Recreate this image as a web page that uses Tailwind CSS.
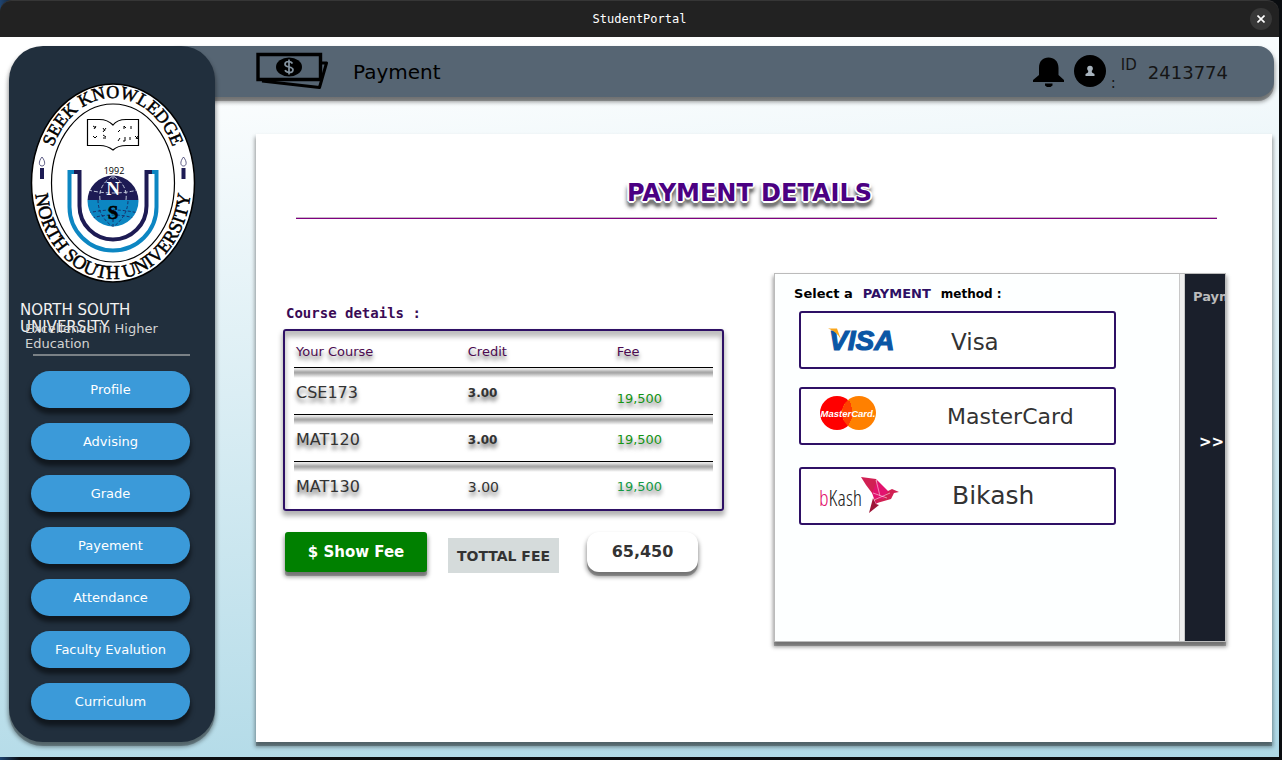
<!DOCTYPE html>
<html lang="en">
<head>
<meta charset="utf-8">
<meta name="viewport" content="width=device-width, initial-scale=1">
<title>StudentPortal</title>
<script src="https://cdn.jsdelivr.net/npm/@tailwindcss/browser@4"></script>
</head>
<body class="bg-[linear-gradient(to_right,#1f4470_0px,#0a0d10_20px)] font-['DejaVu_Sans',sans-serif] text-[#333333]">
<div class="flex min-h-screen flex-col pr-[3px] pb-[3px]">

  <!-- Window title bar -->
  <div class="relative flex h-[37px] items-center justify-center rounded-t-xl border-t border-[#363636] bg-[#222222]">
    <span class="font-['DejaVu_Sans_Mono',monospace] text-xs text-white">StudentPortal</span>
    <button type="button" aria-label="Close" class="absolute right-[7px] grid size-[22px] place-items-center rounded-full bg-[#383838] text-white">
      <svg class="size-2" viewBox="0 0 8 8" fill="none" stroke="currentColor" stroke-width="1.6"><path d="M.5.5l7 7M7.5.5l-7 7"/></svg>
    </button>
  </div>

  <main class="flex grow bg-[linear-gradient(176deg,#ffffff_4%,#add8e6)] pt-[9px] pb-[15px] pl-[9px]">

    <!-- Sidebar -->
    <aside class="relative z-10 w-[206px] shrink-0 rounded-[34px] bg-[#212f3d] pt-9 shadow-[0_4px_0_rgba(0,0,0,0.25),0_4px_4px_1px_rgba(0,0,0,0.4)]">
      <svg class="ml-[21px] block h-[202px] w-[166px]" viewBox="30 82 166 202" role="img" aria-label="North South University seal">
        <defs>
          <path id="arc-top" d="M47 183 A66 85 0 0 1 179 183"/>
          <path id="arc-bottom" d="M35 183 A78 96 0 0 0 191 183"/>
          <clipPath id="globe"><circle cx="113" cy="201" r="25.500"/></clipPath>
        </defs>
        <ellipse cx="113" cy="183" rx="81.500" ry="99" fill="#fff" stroke="#000" stroke-width="1.500"/>
        <ellipse cx="113" cy="183" rx="61.500" ry="79" fill="#fff" stroke="#000" stroke-width="1.200"/>
        <g font-family="'Liberation Serif', serif" fill="#000" stroke="#000" stroke-width=".5" text-anchor="middle">
          <text font-size="18"><textPath href="#arc-top" startOffset="50%">SEEK KNOWLEDGE</textPath></text>
          <text font-size="19"><textPath href="#arc-bottom" startOffset="50%">NORTH SOUTH UNIVERSITY</textPath></text>
        </g>
        <g fill="#1d1b54"><rect x="40" y="168" width="4" height="11"/><rect x="181.500" y="168" width="4" height="11"/></g>
        <g fill="#fff" stroke="#1d1b54" stroke-width=".7"><path d="M42 157c4 5 3 9 0 9s-4-4 0-9zM183.500 157c4 5 3 9 0 9s-4-4 0-9z"/></g>
        <!-- open book -->
        <path d="M87.500 119.500h12c6 0 10 2 13.500 5.500 3-4 7-5.500 13-5.500h12.500v26h-12c-6 0-10 1-13.500 4.500-4-3-8-4.500-13-4.500h-12.500z" fill="#fff" stroke="#000" stroke-width="1.200"/>
        <path d="M93 126l3 2m0-2l-2 3m9-1l2 3m1-3l-3 4M93 136l2 2 2-2m6-1l3 2m-3 1h3M118 132l2-2m4-1v-3l2 2m5-2v3m-13 12l2-3m5-1v4h-2m7-4v3m5-4l3 3m0-3l-2 3" fill="none" stroke="#000" stroke-width="1"/>
        <!-- U-shaped bands -->
        <path d="M75 172h-5.500v35a43.500 43.500 0 0 0 87 0v-35H151" fill="none" stroke="#0c86c2" stroke-width="4"/>
        <path d="M74 172h5.500v34a33.500 33.500 0 0 0 67 0v-34h5.500" fill="none" stroke="#1d1b54" stroke-width="4"/>
        <text x="114" y="174" text-anchor="middle" font-family="'Open Sans', sans-serif" font-size="9" fill="#000">1992</text>
        <g clip-path="url(#globe)">
          <rect x="87" y="175" width="52" height="25" fill="#1d1b54"/><rect x="87" y="200" width="52" height="27" fill="#0c86c2"/>
          <g fill="none" stroke="#e8f2fa" stroke-width=".8" stroke-dasharray="4 2"><path d="M88 190q25 6 50 0M113 175v6"/><path d="M100 200q-2-15 13-24q15 9 13 24"/></g>
          <g fill="none" stroke="#1d1b54" stroke-width=".8" stroke-dasharray="3 2"><path d="M88 213q25-6 50 0M113 219v8M92 218q21-6 42 0"/><path d="M98 200q0 16 15 27q15-11 15-27"/></g>
        </g>
        <g text-anchor="middle" font-family="'Liberation Serif', serif" font-weight="700" font-size="19"><text x="113" y="195" fill="#fff">N</text><text x="113" y="219" fill="#000" stroke="#000" stroke-width=".6">S</text></g>
      </svg>
      <p class="mt-[18px] ml-[11px] w-[150px] text-[15px] leading-[17px] text-[#f2f2f2]">NORTH SOUTH UNIVERSITY</p>
      <p class="-mt-[15px] ml-4 w-[150px] text-[13px] leading-[15px] text-[#d3d3d3]">Excellence in Higher Education</p>
      <hr class="mt-[3px] mr-[25px] ml-6 h-[2px] border-0 bg-[#7a8186]">
      <nav class="mt-[15px] mr-[25px] ml-[22px] grid gap-[15px] text-[13px] text-white">
        <button type="button" class="h-[37px] rounded-full bg-[#3b9ad9] shadow-[0_5px_4px_1px_rgba(0,0,0,0.5)]">Profile</button>
        <button type="button" class="h-[37px] rounded-full bg-[#3b9ad9] shadow-[0_5px_4px_1px_rgba(0,0,0,0.5)]">Advising</button>
        <button type="button" class="h-[37px] rounded-full bg-[#3b9ad9] shadow-[0_5px_4px_1px_rgba(0,0,0,0.5)]">Grade</button>
        <button type="button" class="h-[37px] rounded-full bg-[#3b9ad9] shadow-[0_5px_4px_1px_rgba(0,0,0,0.5)]">Payement</button>
        <button type="button" class="h-[37px] rounded-full bg-[#3b9ad9] shadow-[0_5px_4px_1px_rgba(0,0,0,0.5)]">Attendance</button>
        <button type="button" class="h-[37px] rounded-full bg-[#3b9ad9] shadow-[0_5px_4px_1px_rgba(0,0,0,0.5)]">Faculty Evalution</button>
        <button type="button" class="h-[37px] rounded-full bg-[#3b9ad9] shadow-[0_5px_4px_1px_rgba(0,0,0,0.5)]">Curriculum</button>
      </nav>
    </aside>

    <div class="flex min-w-0 grow flex-col">
      <!-- Page header -->
      <header class="mr-[5px] -ml-10 flex h-[51px] items-center rounded-r-2xl bg-[#566573] pr-[46px] pl-[81px] text-[#151515] shadow-[0_4px_0_rgba(0,0,0,0.25),0_4px_4px_1px_rgba(0,0,0,0.4)]">
        <svg class="-mt-[2px] h-[37px] w-[73px]" viewBox="0 0 73 37" fill="none" stroke="#000" aria-hidden="true">
          <path d="M2 2.500h62.500v25H2z" stroke-width="3.400"/>
          <path d="M6 29l57.500 6.500L70.500 11H66" stroke-width="3" stroke-linejoin="round"/>
          <ellipse cx="33" cy="15" rx="13" ry="9.500" fill="#000" stroke="none"/>
          <path d="M36.500 11.500c-1-1.500-2.500-2-4-2-2 0-3.500 1-3.500 2.700 0 3.800 8 1.900 8 5.500 0 1.800-1.700 2.800-3.800 2.800-1.800 0-3.400-.7-4.200-2.300M33 7.500v15" stroke="#8594a1" stroke-width="1.700"/>
        </svg>
        <h1 class="ml-6 text-xl text-black">Payment</h1>
        <svg class="mt-[2px] ml-auto h-[31px] w-[31px]" viewBox="0 0 31 31" fill="#000" aria-label="Notifications" role="img">
          <path d="M6 11C6 4 10 .5 15.500.5S25.500 4 25.500 11v7l5.500 5v2H0v-2L6 18zM12 26.500h7.500v2l-2 1.500h-3.500l-2-1.500z"/>
        </svg>
        <svg class="-mt-[2px] ml-[10px] size-8" viewBox="0 0 32 32" aria-label="Account" role="img">
          <circle cx="16" cy="16" r="16"/><circle cx="16" cy="13.500" r="2.800" fill="#a7b3bc"/><path d="M14.500 15h3l.5 2.500 2.500 1.500v2h-9v-2l2.500-1.500z" fill="#a7b3bc"/>
        </svg>
        <div class="mt-1 ml-[5px] w-[37px] text-[15px] leading-[18px]"><span class="block pl-[10px]">ID</span><span class="block">:</span></div>
        <span class="mt-[2px] text-lg">2413774</span>
      </header>

      <!-- Payment card -->
      <section class="mt-[37px] mr-[7px] ml-[41px] grow bg-white pr-[46px] pl-[27px] shadow-[0_4px_0_rgba(0,0,0,0.25),0_4px_4px_1px_rgba(0,0,0,0.4)]">
        <h2 class="mt-[43px] pr-[10px] text-center text-2xl leading-8 font-bold text-[#4b0082] [text-shadow:1px_1px_0_#fff,-1px_1px_0_#fff,1px_-1px_0_#fff,-1px_-1px_0_#fff,2px_0_0_#fff,-2px_0_0_#fff,0_2px_0_#fff,0_5px_2px_#777,-2px_4px_4px_#777,2px_4px_4px_#777,0_6px_4px_#777]">PAYMENT DETAILS</h2>
        <hr class="mt-2 mr-[9px] ml-[13px] h-[2px] border-0 bg-[linear-gradient(#c8b8c8_50%,#800080_50%)]">

        <div class="mt-[54px] flex items-start gap-[50px]">
          <div class="min-w-0 flex-[442]">
            <h3 class="mt-[30px] ml-[3px] font-['DejaVu_Sans_Mono',monospace] text-sm leading-5 font-bold text-[#3a0a55]">Course details :</h3>
            <div class="mt-[6px] rounded-[3px] border-2 border-[#2e1065] px-[9px] pb-px shadow-[0_4px_5px_1px_rgba(0,0,0,0.3),inset_0_5px_5px_1px_rgba(0,0,0,0.25)]">
              <table class="w-full table-fixed border-collapse text-left [text-shadow:0_4px_4px_rgba(0,0,0,0.6)]">
                <colgroup><col class="w-[41%]"><col class="w-[36%]"><col></colgroup>
                <thead>
                  <tr class="h-9 text-[13px] text-[#4b0a50]">
                    <th class="pt-[6px] pl-[2px] font-normal">Your Course</th><th class="pt-[6px] pl-[2px] font-normal">Credit</th><th class="pt-[6px] font-normal">Fee</th>
                  </tr>
                </thead>
                <tbody class="[&>tr]:h-[47px] [&>tr]:border-t [&>tr]:border-black [&>tr]:bg-[linear-gradient(#e8e8e8_1px,#a8a8a8_4px,#a8a8a8_5px,transparent_10px)] [&_td]:pt-[4px]">
                  <tr><td class="pl-[2px] text-base">CSE173</td><td class="pl-[2px] text-xs font-bold">3.00</td><td class="pt-4! text-[13px] text-[#159415]">19,500</td></tr>
                  <tr><td class="pl-[2px] text-base">MAT120</td><td class="pl-[2px] text-xs font-bold">3.00</td><td class="text-[13px] text-[#159415]">19,500</td></tr>
                  <tr><td class="pl-[2px] text-base">MAT130</td><td class="pl-[2px] text-sm">3.00</td><td class="text-[13px] text-[#159a45]">19,500</td></tr>
                </tbody>
              </table>
            </div>
            <div class="mt-[21px] ml-[2px] flex items-start font-bold">
              <button type="button" class="h-10 w-[142px] rounded-[3px] bg-[#008000] text-[15px] text-white shadow-[0_4px_0_rgba(0,0,0,0.25),0_4px_4px_1px_rgba(0,0,0,0.4)]">$ Show Fee</button>
              <label for="total" class="mt-[6px] ml-[21px] grid h-[35px] w-[111px] place-items-center bg-[#d5dbdb] text-sm">TOTTAL FEE</label>
              <output id="total" class="ml-7 grid h-10 w-[111px] place-items-center rounded-xl bg-white text-base shadow-[0_4px_0_rgba(0,0,0,0.25),0_4px_4px_1px_rgba(0,0,0,0.4)]">65,450</output>
            </div>
          </div>

          <!-- Payment method split panel -->
          <div class="flex h-[369px] min-w-0 flex-[451] overflow-hidden border border-[#bbbbbb] bg-[#fdffff] shadow-[0_4px_0_rgba(0,0,0,0.25),0_4px_4px_1px_rgba(0,0,0,0.4)]">
            <div class="min-w-0 grow pt-3 pr-[63px] pl-6">
              <p class="-ml-[5px] flex gap-[10px] text-[13px] leading-4 font-bold whitespace-nowrap text-black"><span>Select a</span> <span class="text-[#2e1065]">PAYMENT</span> <span class="text-xs leading-4">method :</span></p>
              <button type="button" class="mt-[9px] flex h-[58px] w-full items-center rounded-[3px] border-2 border-[#2e1065] bg-white pl-4 text-[23px]">
                <svg class="h-10 w-[84px]" viewBox="817 321 84 40" aria-hidden="true">
                  <text x="829" y="350.500" font-family="'Liberation Sans', sans-serif" font-style="italic" font-weight="700" font-size="28" fill="#0b56a5" stroke="#0b56a5" stroke-width="1.200">VISA</text>
                  <path d="M828 329.500h9l4 11c-3-6-8-9-13-11z" fill="#f9a51a"/>
                </svg>
                <span class="mt-1 ml-[50px]">Visa</span>
              </button>
              <button type="button" class="mt-[18px] flex h-[58px] w-full items-center rounded-[3px] border-2 border-[#2e1065] bg-white pl-4 text-[22px]">
                <svg class="h-10 w-[84px]" viewBox="817 396 84 40" aria-hidden="true">
                  <circle cx="837" cy="413" r="17" fill="#f00"/><circle cx="859" cy="413" r="17" fill="#ff8000"/>
                  <path d="M846 402h4m-5 2h6m-7 2h7m-8 2h9m-9 2h9m-10 2h10m-10 2h10m-10 2h10m-9 2h9m-8 2h7m-7 2h6m-5 2h4" stroke="#f00" stroke-width="1"/>
                  <text x="848" y="416.500" text-anchor="middle" font-family="'Liberation Sans', sans-serif" font-style="italic" font-weight="700" font-size="9.500" fill="#fff">MasterCard.</text>
                </svg>
                <span class="ml-[46px]">MasterCard</span>
              </button>
              <button type="button" class="mt-[22px] flex h-[58px] w-full items-center rounded-[3px] border-2 border-[#2e1065] bg-white pl-4 text-[25px]">
                <svg class="h-10 w-[84px]" viewBox="817 476 84 40" aria-hidden="true">
                  <text x="819" y="506" font-family="'Open Sans Condensed Light', 'Open Sans Condensed', 'Liberation Sans Narrow', sans-serif" font-weight="300" font-size="22" fill="#222"><tspan fill="#e2136e">b</tspan>Kash</text>
                  <path d="M861 477l15 2 5 20-9-6-6-8z" fill="#d12053"/><path d="M876 479l14 14-7 6z" fill="#e2136e"/>
                  <path d="M877 481l-5 12 4 11 8-6z" fill="#e2136e"/><path d="M883 499l5-8 4-2 7 3-5 1-3 6-14 4-3-4z" fill="#d12053"/>
                  <path d="M873 498l3 6 3 1-10 8z" fill="#9e1638"/>
                  <path d="M876 480l4 16m10-3l-16 7m-1-7l14 5" stroke="#fff" stroke-width=".5" fill="none"/>
                </svg>
                <span class="ml-[51px]">Bikash</span>
              </button>
            </div>
            <div class="w-[6px] shrink-0 border-x border-[#c8c8c8] bg-[#eeeeee]"></div>
            <div class="flex w-10 shrink-0 flex-col overflow-hidden bg-[#1a1f2b] pt-[15px] pl-2 font-bold whitespace-nowrap">
              <span class="text-[13px] leading-4 text-[#bbbbbb]">Payment</span>
              <button type="button" class="mt-[129px] ml-[6px] self-start text-[15px] leading-4 text-white">&gt;&gt;</button>
            </div>
          </div>
        </div>
      </section>
    </div>
  </main>
</div>
</body>
</html>
